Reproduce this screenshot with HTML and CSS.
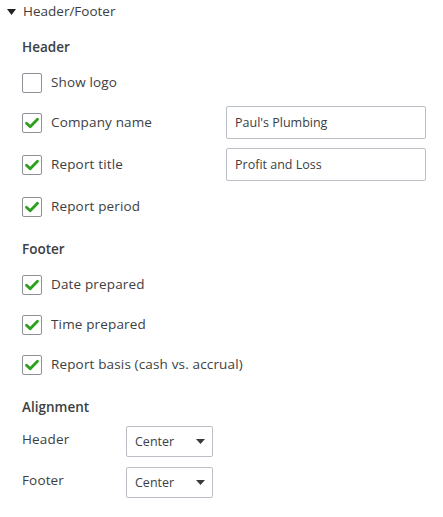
FILE: index.html
```html
<!DOCTYPE html>
<html>
<head>
<meta charset="utf-8">
<link rel="stylesheet" href="styles.css">
</head>
<body>
<div class="panel">
  <div class="toggle">
    <svg class="caret" width="9" height="6" viewBox="0 0 9 6"><path d="M0 0H9L4.5 6Z" fill="#222"/></svg>
    <span>Header/Footer</span>
  </div>
  <div class="section">
    <div class="heading">Header</div>
    <div class="row">
      <span class="box"></span><span class="label">Show logo</span>
    </div>
    <div class="row">
      <span class="box checked"><svg width="20" height="20" viewBox="0 0 20 20"><path d="M4.5 10.2L8.2 13.8L15.5 6.2" fill="none" stroke="#2ca01c" stroke-width="2.8" stroke-linecap="round" stroke-linejoin="round"/></svg></span>
      <span class="label wide">Company name</span>
      <div class="input">Paul's Plumbing</div>
    </div>
    <div class="row spaced">
      <span class="box checked"><svg width="20" height="20" viewBox="0 0 20 20"><path d="M4.5 10.2L8.2 13.8L15.5 6.2" fill="none" stroke="#2ca01c" stroke-width="2.8" stroke-linecap="round" stroke-linejoin="round"/></svg></span>
      <span class="label wide">Report title</span>
      <div class="input">Profit and Loss</div>
    </div>
    <div class="row spaced">
      <span class="box checked"><svg width="20" height="20" viewBox="0 0 20 20"><path d="M4.5 10.2L8.2 13.8L15.5 6.2" fill="none" stroke="#2ca01c" stroke-width="2.8" stroke-linecap="round" stroke-linejoin="round"/></svg></span>
      <span class="label">Report period</span>
    </div>
  </div>
  <div class="section">
    <div class="heading">Footer</div>
    <div class="row">
      <span class="box checked"><svg width="20" height="20" viewBox="0 0 20 20"><path d="M4.5 10.2L8.2 13.8L15.5 6.2" fill="none" stroke="#2ca01c" stroke-width="2.8" stroke-linecap="round" stroke-linejoin="round"/></svg></span>
      <span class="label">Date prepared</span>
    </div>
    <div class="row">
      <span class="box checked"><svg width="20" height="20" viewBox="0 0 20 20"><path d="M4.5 10.2L8.2 13.8L15.5 6.2" fill="none" stroke="#2ca01c" stroke-width="2.8" stroke-linecap="round" stroke-linejoin="round"/></svg></span>
      <span class="label">Time prepared</span>
    </div>
    <div class="row">
      <span class="box checked"><svg width="20" height="20" viewBox="0 0 20 20"><path d="M4.5 10.2L8.2 13.8L15.5 6.2" fill="none" stroke="#2ca01c" stroke-width="2.8" stroke-linecap="round" stroke-linejoin="round"/></svg></span>
      <span class="label">Report basis (cash vs. accrual)</span>
    </div>
  </div>
  <div class="section align">
    <div class="heading">Alignment</div>
    <div class="arow">
      <span class="alabel">Header</span>
      <div class="select"><span>Center</span><svg width="9" height="5" viewBox="0 0 9 5"><path d="M0 0H9L4.5 5Z" fill="#393a3d"/></svg></div>
    </div>
    <div class="arow">
      <span class="alabel">Footer</span>
      <div class="select"><span>Center</span><svg width="9" height="5" viewBox="0 0 9 5"><path d="M0 0H9L4.5 5Z" fill="#393a3d"/></svg></div>
    </div>
  </div>
</div>
</body>
</html>
```

FILE: styles.css
```css
html, body {
  margin: 0;
  padding: 0;
  background: #fff;
}
body {
  font-family: "Open Sans", "Noto Sans", sans-serif;
  font-size: 13px;
  color: #3d3e42;
}
.panel {
  display: flex;
  flex-direction: column;
}
.toggle {
  height: 22px;
  display: flex;
  align-items: center;
  gap: 7px;
  padding-left: 7px;
  font-size: 13.5px;
}
.toggle span {
  margin-top: -1px;
}
.caret {
  margin-top: 1px;
}
.section {
  display: flex;
  flex-direction: column;
  padding-left: 22px;
}
.section:nth-child(2) {
  margin-top: 15px;
}
.section + .section {
  margin-top: 12px;
}
.heading {
  font-weight: 600;
  font-size: 13.5px;
  line-height: 21px;
  margin-bottom: 5px;
}
.row {
  height: 40px;
  display: flex;
  align-items: center;
}
.row.spaced {
  margin-top: 2px;
}
.box {
  width: 18px;
  height: 18px;
  border: 1px solid #8d9096;
  border-radius: 2px;
  flex: none;
  position: relative;
  background: #fff;
}
.box svg {
  position: absolute;
  left: -1px;
  top: -1px;
}
.label {
  margin-left: 9px;
  margin-top: -3px;
  font-size: 13.5px;
  letter-spacing: 0.15px;
}
.label.wide {
  width: 175px;
}
.input {
  width: 190px;
  height: 30px;
  border: 1px solid #babec5;
  border-radius: 2px;
  box-sizing: content-box;
  padding: 0 0 0 8px;
  display: flex;
  align-items: center;
  font-size: 12.5px;
  margin-top: -1px;
}
.input, .select span {
  padding-bottom: 1px;
}
.align .heading {
  margin-bottom: 8px;
}
.arow {
  display: flex;
  align-items: center;
  height: 31px;
}
.arow + .arow {
  margin-top: 10px;
}
.alabel {
  width: 104px;
  margin-top: -5px;
  font-size: 13.5px;
  letter-spacing: 0.15px;
}
.select {
  width: 71px;
  height: 29px;
  border: 1px solid #babec5;
  border-radius: 2px;
  padding: 0 6px 0 8px;
  display: flex;
  align-items: center;
  justify-content: space-between;
  font-size: 12.5px;
}
.select svg {
  margin-right: 1px;
}
```
